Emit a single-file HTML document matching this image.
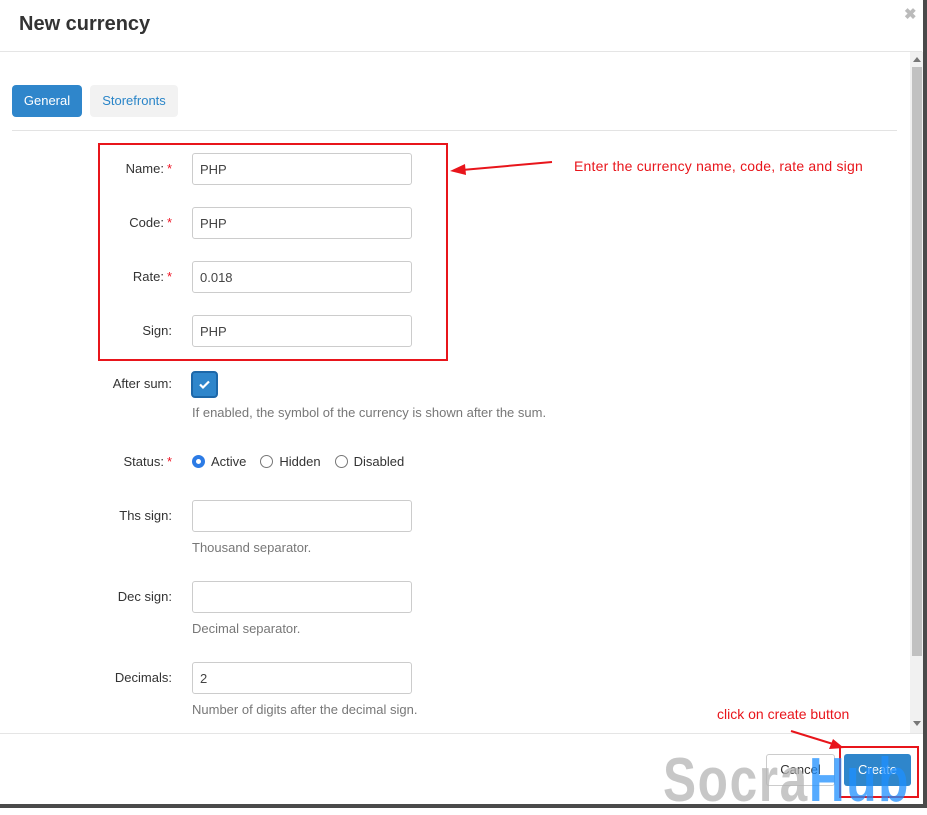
<!DOCTYPE html>
<html><head><style>
*{box-sizing:border-box;margin:0;padding:0}
body{width:927px;height:808px;position:relative;background:#fff;font-family:"Liberation Sans",sans-serif;overflow:hidden;color:#333}
.a{position:absolute}
.lbl{position:absolute;right:755px;font-size:13px;color:#333;text-align:right;white-space:nowrap}
.lbl b{color:#e12;font-weight:normal;margin-left:3px}
.inp{position:absolute;left:192px;width:220px;height:32px;border:1px solid #ccc;border-radius:3px;font-size:13px;padding:8px 7px;color:#444}
.help{position:absolute;left:192px;font-size:13px;color:#777}
.radio{display:inline-block;width:13px;height:13px;border:1px solid #777;border-radius:50%;vertical-align:-2px;margin-right:6px}
</style></head><body>
<div class="a" style="left:19px;top:13px;font-size:20px;font-weight:bold;color:#333">New currency</div>
<div class="a" style="left:904px;top:5px;font-size:15px;font-weight:bold;color:#bbb">✖</div>
<div class="a" style="left:0;top:51px;width:922px;height:1px;background:#e5e5e5"></div>
<div class="a" style="left:910px;top:52px;width:13px;height:681px;background:#f1f1f1"></div>
<div class="a" style="left:912px;top:67px;width:10px;height:589px;background:#c1c1c1"></div>
<div class="a" style="left:913px;top:57px;width:0;height:0;border:4px solid transparent;border-bottom:5px solid #777;border-top:0"></div>
<div class="a" style="left:913px;top:721px;width:0;height:0;border:4px solid transparent;border-top:5px solid #777;border-bottom:0"></div>
<div class="a" style="left:923px;top:0;width:4px;height:808px;background:#4a4a4a"></div>
<div class="a" style="left:0;top:804px;width:927px;height:4px;background:#4a4a4a"></div>

<div class="a" style="left:12px;top:85px;width:70px;height:32px;background:#2f86cb;border-radius:4px;color:#fff;font-size:13px;text-align:center;line-height:32px">General</div>
<div class="a" style="left:90px;top:85px;width:88px;height:32px;background:#f2f2f2;border-radius:4px;color:#2a85c8;font-size:13px;text-align:center;line-height:32px">Storefronts</div>
<div class="a" style="left:12px;top:130px;width:885px;height:1px;background:#e3e3e3"></div>

<div class="lbl" style="top:161px">Name:<b>*</b></div><div class="inp" style="top:153px">PHP</div>
<div class="lbl" style="top:215px">Code:<b>*</b></div><div class="inp" style="top:207px">PHP</div>
<div class="lbl" style="top:269px">Rate:<b>*</b></div><div class="inp" style="top:261px">0.018</div>
<div class="lbl" style="top:323px;right:755px">Sign:</div><div class="inp" style="top:315px">PHP</div>
<div class="a" style="left:98px;top:143px;width:350px;height:218px;border:2px solid #e8151b"></div>
<svg class="a" style="left:448px;top:156px" width="106" height="20"><line x1="104" y1="6" x2="14" y2="14" stroke="#e8151b" stroke-width="2"/><polygon points="2,15 17,8 18,19" fill="#e8151b"/></svg>
<div class="a" style="left:574px;top:158px;font-size:14px;letter-spacing:.2px;color:#e8151b">Enter the currency name, code, rate and sign</div>

<div class="lbl" style="top:376px">After sum:</div>
<div class="a" style="left:191px;top:371px;width:27px;height:27px;border:2px solid #1d67a8;border-radius:4px;background:#2f86cb"></div>
<svg class="a" style="left:197px;top:377px" width="15" height="15"><path d="M3 7.5l3 3 6-6" stroke="#fff" stroke-width="2.2" fill="none"/></svg>
<div class="help" style="top:405px">If enabled, the symbol of the currency is shown after the sum.</div>

<div class="lbl" style="top:454px">Status:<b>*</b></div>
<div class="a" style="left:192px;top:454px;font-size:13px;color:#333;white-space:nowrap"><span class="radio" style="border:4px solid #2c7be5"></span>Active<span style="display:inline-block;width:14px"></span><span class="radio"></span>Hidden<span style="display:inline-block;width:14px"></span><span class="radio"></span>Disabled</div>

<div class="lbl" style="top:508px">Ths sign:</div><div class="inp" style="top:500px"></div>
<div class="help" style="top:540px">Thousand separator.</div>
<div class="lbl" style="top:589px">Dec sign:</div><div class="inp" style="top:581px"></div>
<div class="help" style="top:621px">Decimal separator.</div>
<div class="lbl" style="top:670px">Decimals:</div><div class="inp" style="top:662px">2</div>
<div class="help" style="top:702px">Number of digits after the decimal sign.</div>

<div class="a" style="left:0;top:733px;width:923px;height:1px;background:#e5e5e5"></div>
<div class="a" style="left:717px;top:706px;font-size:14px;color:#e8151b">click on create button</div>
<svg class="a" style="left:788px;top:728px" width="60" height="25"><line x1="3" y1="3" x2="45" y2="16" stroke="#e8151b" stroke-width="2"/><polygon points="56,20 41,21 45,11" fill="#e8151b"/></svg>
<div class="a" style="left:766px;top:754px;width:69px;height:32px;border:1px solid #ccc;border-radius:3px;font-size:13px;text-align:center;line-height:30px;color:#333">Cancel</div>
<div class="a" style="left:844px;top:754px;width:67px;height:32px;background:#2f86cb;border-radius:3px;font-size:13px;text-align:center;line-height:32px;color:#fff">Create</div>
<div class="a" style="left:839px;top:746px;width:80px;height:52px;border:2px solid #e8151b"></div>
<div class="a" style="left:663px;top:750px;font-size:62px;font-weight:bold;letter-spacing:2px;line-height:62px;white-space:nowrap;opacity:.75;transform:scaleX(.8);transform-origin:0 0"><span style="color:#b5b5b5">Socra</span><span style="color:#1e90ff">Hub</span></div>
</body></html>
